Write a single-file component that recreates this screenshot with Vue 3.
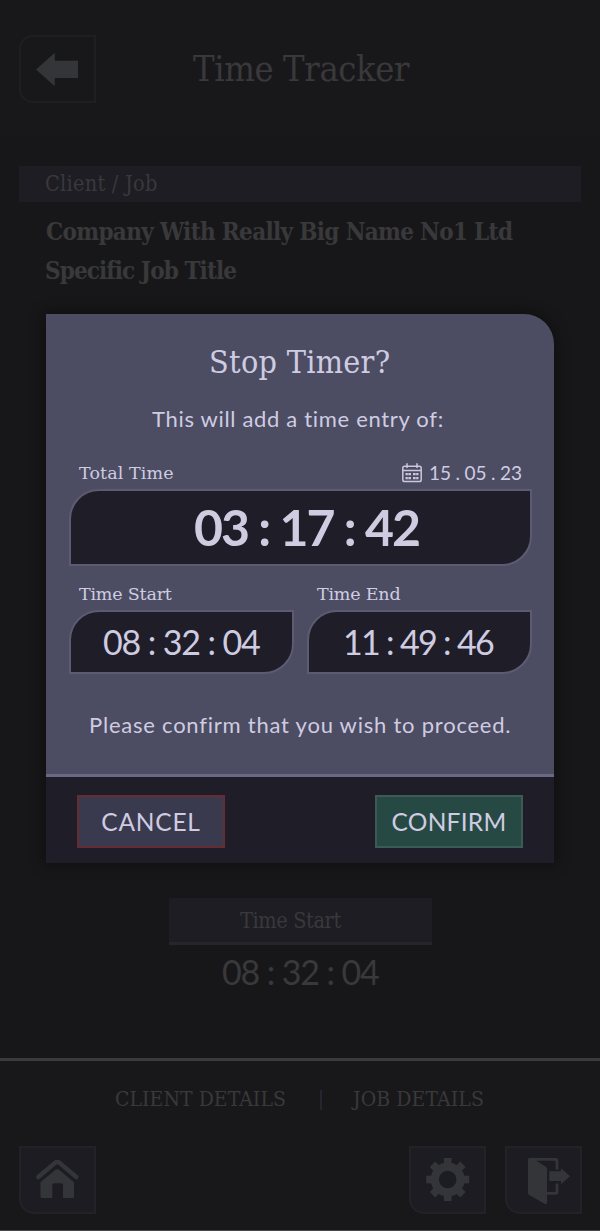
<script setup>
const teeth = [0, 45, 90, 135, 180, 225, 270, 315]
</script>

<template>
  <div class="screen">
    <header class="header">
      <button class="tile back" aria-label="Back">
        <svg width="77" height="67" viewBox="0 0 77 67"><path d="M17 34.5 35.8 17.8V25.8H59V43H35.8V51.2Z" fill="#343538" /></svg>
      </button>
      <h1 class="slab title">Time Tracker</h1>
    </header>

    <main class="main">
      <div class="bar slab">Client / Job</div>
      <p class="slab strong company">Company With Really Big Name No1 Ltd</p>
      <p class="slab strong job">Specific Job Title</p>
      <div class="start">
        <div class="start-label slab">Time Start</div>
        <div class="start-time">08 : 32 : 04</div>
      </div>
    </main>

    <footer class="footer">
      <nav class="links slab">
        <span class="client">CLIENT DETAILS</span>
        <i class="sep"></i>
        <span class="jobs">JOB DETAILS</span>
      </nav>
      <div class="tools">
        <button class="tile filled" aria-label="Home">
          <svg width="77" height="68" viewBox="0 0 77 68">
            <path d="M19.3 31 36 16.9Q38.3 15.3 40.6 16.9L57.3 31" fill="none" stroke="#343538" stroke-width="4.4" stroke-linecap="round" stroke-linejoin="round" />
            <path d="M21.5 36.3 36.2 24Q38.3 22.4 40.4 24L55 36.3V50.5Q55 52 53.5 52H44V38.8Q44 37.2 42.4 37.2H35Q33.3 37.2 33.3 38.8V52H23Q21.5 52 21.5 50.5Z" fill="#343538" />
          </svg>
        </button>
        <button class="tile filled settings" aria-label="Settings">
          <svg width="77" height="68" viewBox="0 0 77 68">
            <circle cx="38.7" cy="33.5" r="12.9" fill="none" stroke="#343538" stroke-width="8.2" />
            <rect v-for="a in teeth" :key="a" x="34.9" y="12" width="7.6" height="8" fill="#343538" :transform="`rotate(${a} 38.7 33.5)`" />
          </svg>
        </button>
        <button class="tile filled" aria-label="Log out">
          <svg width="77" height="68" viewBox="0 0 77 68">
            <path d="M23 13.6Q23 12 24.6 12H27L40.5 20.5Q42 21.5 42 23.3V56.6Q42 59 40 58L24.3 49Q23 48.2 23 46.5Z" fill="#343538" />
            <path d="M25 13.4H50.6Q52 13.4 52 14.8V23.5M52 37.5V46Q52 47.4 50.6 47.4H41" fill="none" stroke="#343538" stroke-width="2.8" />
            <path d="M44.2 25.3H56V22.3L65 30.3 56 38.3V35H44.2Z" fill="#343538" />
          </svg>
        </button>
      </div>
    </footer>

    <section class="modal" role="dialog">
      <div class="body">
        <h2 class="slab heading">Stop Timer?</h2>
        <p class="intro">This will add a time entry of:</p>
        <div class="row labels">
          <span class="slab label total">Total Time</span>
          <svg class="cal" width="20" height="20" viewBox="0 0 20 20" fill="none" stroke="#cbc8de">
            <rect x=".8" y="3.3" width="18.4" height="15.2" rx="1.8" stroke-width="1.5" />
            <path d="M1 7.4H19M5 .3V5M15 .3V5" stroke-width="1.5" />
            <path d="M3.5 11.2H9M11 11.2H16.5M3.5 15.1H9M11 15.1H16.5" stroke-width="2.3" />
            <path d="M6.2 9.5V16.5M13.8 9.5V16.5" stroke="#4c4c62" stroke-width=".5" />
          </svg>
          <span class="date">15 . 05 . 23</span>
        </div>
        <div class="field big"><span>03 : 17 : 42</span></div>
        <div class="pair">
          <div>
            <div class="slab label st">Time Start</div>
            <div class="field small"><span>08 : 32 : 04</span></div>
          </div>
          <div>
            <div class="slab label en">Time End</div>
            <div class="field small end"><span>11 : 49 : 46</span></div>
          </div>
        </div>
        <p class="ask">Please confirm that you wish to proceed.</p>
      </div>
      <div class="actions">
        <button class="btn cancel">CANCEL</button>
        <button class="btn confirm">CONFIRM</button>
      </div>
    </section>
  </div>
</template>

<style>
body { background: #171719; }
</style>

<style scoped>
* { box-sizing: border-box; }
h1, h2, p { margin: 0; font-weight: 400; }
.screen {
  position: relative; width: 600px; height: 1231px; overflow: hidden;
  display: flex; flex-direction: column;
  background: #171719; color: #39393b;
  font-family: Lato, sans-serif; white-space: nowrap;
  border-bottom: 1px solid #49494c;
}
.slab { font-family: "DejaVu Serif Condensed", "DejaVu Serif", serif; }
.header { height: 136px; padding: 35px 0 0 19px; display: flex; align-items: flex-start; background: #18181a; }
.tile { width: 77px; height: 68px; padding: 0; background: transparent; border: 2px solid #1f1f22; flex: none; display: flex; overflow: hidden; }
.tile svg { margin: -2px 0 0 -2px; flex: none; }
.back { border-radius: 14px 0 0 14px; }
.filled { background: #1d1c22; border-color: #232327; border-radius: 0 0 0 15px; }
.title { margin-left: 97px; font-size: 36px; line-height: 68px; letter-spacing: -0.4px; }

.main { height: 922px; padding-top: 30px; }
.bar { width: 562px; height: 36px; margin-left: 19px; padding-left: 26px; background: #1e1d23; font-size: 21.5px; line-height: 35px; letter-spacing: .27px; }
.strong { font-weight: 700; font-size: 24px; line-height: 39px; margin-left: 46px; letter-spacing: -.67px; }
.company { padding-top: 10px; }
.job { letter-spacing: -.9px; margin-left: 45px; }
.start { width: 263px; margin: 608px 0 0 169px; }
.start-label { height: 47px; padding-left: 71px; background: #1e1d23; border-bottom: 3px solid #25252b; font-size: 21.5px; line-height: 45px; letter-spacing: -.37px; }
.start-time { padding-left: 53px; font-size: 34px; line-height: 54px; letter-spacing: -1.13px; }

.footer { flex: 1; border-top: 3px solid #3b3b3e; background: #18181a; }
.links { height: 85px; padding-top: 7px; display: flex; font-size: 21px; line-height: 63px; }
.client { width: 205px; margin-left: 115px; letter-spacing: .04px; }
.sep { width: 2px; height: 20px; margin-top: 22px; background: #25252f; }
.jobs { margin-left: 31px; letter-spacing: .1px; }
.tools { display: flex; padding: 0 18px 0 19px; gap: 19px; }
.settings { margin-left: auto; }

.modal { position: absolute; left: 46px; top: 314px; width: 508px; height: 549px; overflow: visible; color: #cfcce2; box-shadow: 0 0 14px 3px rgba(0, 0, 0, .32); border-radius: 0 30px 0 0; }
.body { height: 463px; padding: 19px 22px 0 23px; background: #4c4c62; border-bottom: 3px solid #6a6883; border-radius: 0 30px 0 0; }
.heading { margin-left: 140px; font-size: 32px; line-height: 58px; letter-spacing: .3px; }
.intro { padding-left: 83px; font-size: 22px; line-height: 55px; letter-spacing: .68px; }
.row { display: flex; height: 43px; align-items: flex-end; }
.label { font-family: "DejaVu Serif", serif; font-size: 17.5px; line-height: 32px; padding-left: 10px; letter-spacing: -.2px; }
.total { letter-spacing: .1px; width: 333px; line-height: 31px; }
.cal { margin-bottom: 6px; flex: none; }
.date { font-size: 19px; line-height: 32px; margin-left: 7px; letter-spacing: -.14px; }
.field { background: #1f1e28; border: 2px solid #5d5b73; border-radius: 30px 0 30px 0; }
.big { height: 77px; padding-left: 123px; font-size: 50px; font-weight: 700; line-height: 73px; letter-spacing: -1.94px; }
.pair { display: grid; grid-template-columns: 225px 225px; gap: 13px; margin-top: 12px; }
.small { height: 64px; padding-left: 32px; font-size: 34px; line-height: 60px; letter-spacing: -1.13px; }
.end { padding-left: 34px; letter-spacing: -1.68px; }
.ask { padding-left: 20px; margin-top: 24px; font-size: 22px; line-height: 53px; letter-spacing: .77px; }
.actions { height: 86px; padding: 18px 31px 0; display: flex; justify-content: space-between; background: #1f1e28; }
.btn { width: 148px; height: 53px; padding: 0; font: 24.5px/49px Lato, sans-serif; color: #cfcce2; border: 2px solid; }
.cancel { background: #3a3a4f; border-color: #652c31; letter-spacing: .77px; }
.confirm { background: #264a43; border-color: #3c5b54; letter-spacing: .27px; }
</style>
